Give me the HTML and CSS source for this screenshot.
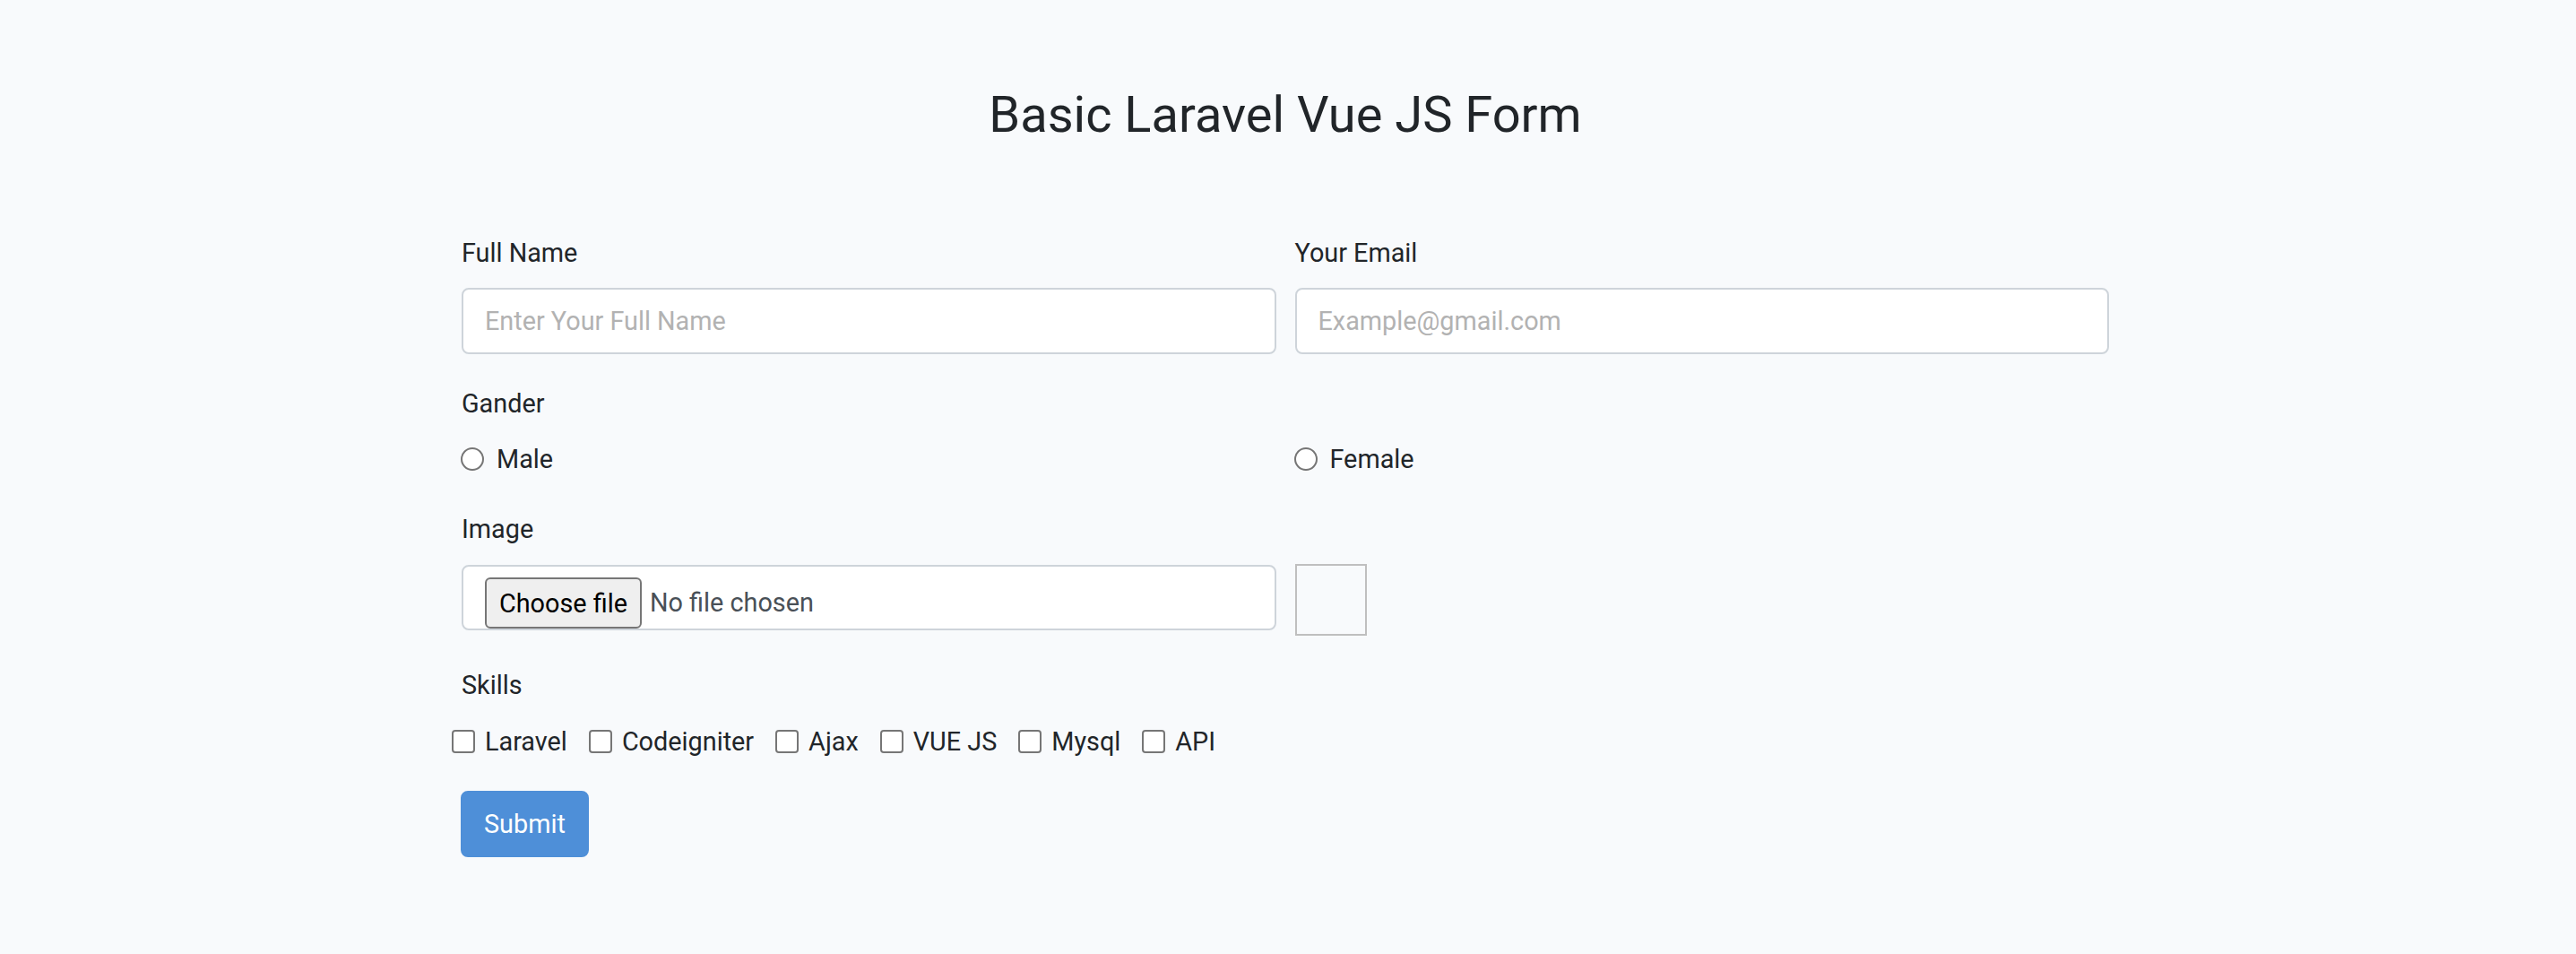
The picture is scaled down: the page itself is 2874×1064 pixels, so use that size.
FILE: index.html
```html
<!DOCTYPE html>
<html lang="en">
<head>
<meta charset="utf-8">
<title>Basic Laravel Vue JS Form</title>
<link rel="stylesheet" href="styles.css">
</head>
<body>
<main class="page">
  <h3 class="title">Basic Laravel Vue JS Form</h3>
  <form class="form">
    <div class="row group">
      <div class="field">
        <label class="label" for="name">Full Name</label>
        <input class="control" id="name" type="text" placeholder="Enter Your Full Name">
      </div>
      <div class="field">
        <label class="label" for="email">Your Email</label>
        <input class="control" id="email" type="email" placeholder="Example@gmail.com">
      </div>
    </div>

    <div class="group">
      <span class="label">Gander</span>
      <div class="row">
        <label class="choice"><input class="radio" type="radio" name="gender" value="male">Male</label>
        <label class="choice"><input class="radio" type="radio" name="gender" value="female">Female</label>
      </div>
    </div>

    <div class="group">
      <span class="label">Image</span>
      <div class="row image-row">
        <label class="control file" for="image">
          <input class="file-input" id="image" type="file">
          <span class="file-btn">Choose file</span>
          <span class="file-name">No file chosen</span>
        </label>
        <div class="preview"></div>
      </div>
    </div>

    <div class="group">
      <span class="label">Skills</span>
      <div class="skills">
        <label class="skill"><input class="check" type="checkbox">Laravel</label>
        <label class="skill"><input class="check" type="checkbox">Codeigniter</label>
        <label class="skill"><input class="check" type="checkbox">Ajax</label>
        <label class="skill"><input class="check" type="checkbox">VUE JS</label>
        <label class="skill"><input class="check" type="checkbox">Mysql</label>
        <label class="skill"><input class="check" type="checkbox">API</label>
      </div>
    </div>

    <button class="submit" type="submit">Submit</button>
  </form>
</main>
</body>
</html>
```
FILE: styles.css
```css
html, body {
  margin: 0;
  background: #f8fafc;
}

body {
  font-family: Roboto, "Liberation Sans", sans-serif;
  font-size: 28.8px;
  line-height: 1.6;
  color: #212529;
}

.page {
  width: 1838px;
  margin-left: calc(50% - 922px);
  padding-top: 95px;
}

.title {
  margin: 0 0 97px;
  font-size: 56px;
  line-height: 67.2px;
  font-weight: 400;
  text-align: center;
}

.form {
  margin: 0;
}

.row {
  display: grid;
  grid-template-columns: 1fr 1fr;
  column-gap: 21px;
}

.group {
  margin-bottom: 32px;
}

.label {
  display: block;
  margin-bottom: 16px;
}

.control {
  display: block;
  width: 100%;
  box-sizing: border-box;
  height: 74px;
  margin: 0;
  padding: 12px 24px;
  border: 2px solid #ced4da;
  border-radius: 8px;
  background: #fff;
  font: inherit;
  color: #495057;
}

.control::placeholder {
  color: #b2b2b2;
  opacity: 1;
}

.image-row {
  align-items: start;
}

.file {
  display: flex;
  align-items: flex-start;
  height: 73px;
  margin-top: 1px;
  overflow: hidden;
  cursor: pointer;
}

.file-input {
  display: none;
}

.file-btn {
  display: flex;
  align-items: center;
  flex: none;
  height: 57px;
  box-sizing: border-box;
  margin-right: 9px;
  padding: 0 14px;
  border: 2px solid #767676;
  border-radius: 6px;
  background: #efefef;
  color: #000;
  line-height: 1;
}

.file-name {
  line-height: 57px;
  white-space: nowrap;
}

.preview {
  width: 80px;
  height: 80px;
  box-sizing: border-box;
  border: 2px solid #bfbfbf;
}

.choice {
  display: flex;
  align-items: center;
  gap: 14px;
}

.radio {
  appearance: none;
  flex: none;
  width: 26px;
  height: 26px;
  margin: 0 0 0 -1px;
  border: 2px solid #767676;
  border-radius: 50%;
  background: #fff;
}

.skills {
  display: flex;
  align-items: center;
  margin-left: -11px;
}

.skill {
  display: flex;
  align-items: center;
  gap: 11px;
  margin-right: 24px;
}

.check {
  appearance: none;
  flex: none;
  width: 26px;
  height: 26px;
  margin: 0;
  border: 2px solid #767676;
  border-radius: 4px;
  background: #fff;
}

.submit {
  display: block;
  height: 74px;
  margin: 0 0 0 -1px;
  padding: 12px 24px;
  border: 2px solid #4e8fd8;
  border-radius: 8px;
  background: #4e8fd8;
  color: #fff;
  font: inherit;
}
```
